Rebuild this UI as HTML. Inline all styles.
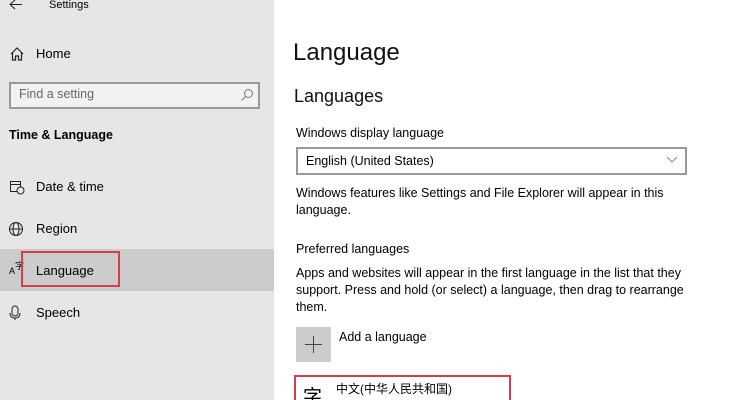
<!DOCTYPE html>
<html style="overflow:hidden;height:400px"><head><meta charset="utf-8"><style>
*{margin:0;padding:0;box-sizing:border-box}
body{width:741px;height:400px;overflow:hidden;background:#fff;font-family:"Liberation Sans","Noto Sans CJK SC",sans-serif;color:#000;position:relative;font-size:12px}
.side{position:absolute;left:0;top:0;width:274px;height:400px;background:#e6e6e6}
.a{position:absolute;white-space:nowrap}
.sel{position:absolute;left:0;top:249px;width:274px;height:42px;background:#cccccc}
.red{position:absolute;border:2px solid #d0404a}
svg{position:absolute}
</style></head><body>
<div class="side">
<div class="sel"></div>
<svg style="left:9px;top:0" width="14" height="10" viewBox="0 0 14 10"><path d="M6 0L1 4.5 6 9M1 4.5H13" stroke="#222" fill="none" stroke-width="1"/></svg>
<div class="a" style="left:49px;top:-1px;font-size:11px">Settings</div>
<svg style="left:9px;top:46px" width="16" height="16" viewBox="0 0 16 16"><path d="M2 8L8 2 14 8M3.5 6.5V14H6.5V10H9.5V14H12.5V6.5" stroke="#222" fill="none" stroke-width="1.2"/></svg>
<div class="a" style="left:36px;top:46px;font-size:13px">Home</div>
<div class="a" style="left:9px;top:82px;width:251px;height:27px;border:2px solid #999;background:#f2f2f2"></div>
<div class="a" style="left:19px;top:87px;font-size:12.5px;color:#666">Find a setting</div>
<svg style="left:240px;top:88px" width="14" height="14" viewBox="0 0 14 14"><circle cx="8.5" cy="5.5" r="4" stroke="#777" fill="none"/><path d="M5.5 8.5L1.5 12.5" stroke="#777"/></svg>
<div class="a" style="left:9px;top:128px;font-size:12.5px;font-weight:bold">Time &amp; Language</div>
<svg style="left:9px;top:179px" width="16" height="16" viewBox="0 0 16 16"><rect x="1.5" y="2.5" width="10" height="10" stroke="#222" fill="none"/><path d="M1.5 5.5H11.5" stroke="#222"/><circle cx="11.5" cy="11.5" r="3.5" fill="#e6e6e6" stroke="#222"/></svg>
<div class="a" style="left:36px;top:179px;font-size:13px">Date &amp; time</div>
<svg style="left:8px;top:221px" width="16" height="16" viewBox="0 0 16 16"><circle cx="8" cy="8" r="6.5" stroke="#222" fill="none"/><ellipse cx="8" cy="8" rx="3" ry="6.5" stroke="#222" fill="none"/><path d="M1.5 8H14.5" stroke="#222"/></svg>
<div class="a" style="left:36px;top:221px;font-size:13px">Region</div>
<div class="a" style="left:9px;top:266px;font-size:9px">A</div>
<div class="a" style="left:15px;top:259px;font-size:9px">字</div>
<div class="a" style="left:36px;top:263px;font-size:13px">Language</div>
<div class="red" style="left:21px;top:251px;width:99px;height:36px"></div>
<svg style="left:9px;top:305px" width="12" height="16" viewBox="0 0 12 16"><rect x="3" y="1" width="6" height="10" rx="3" stroke="#222" fill="none"/><path d="M1 8Q1 13 6 13 11 13 11 8M6 13V15" stroke="#222" fill="none"/></svg>
<div class="a" style="left:36px;top:305px;font-size:13px">Speech</div>
</div>
<div class="a" style="left:293px;top:39px;font-size:24px;color:#111">Language</div>
<div class="a" style="left:294px;top:86px;font-size:18px;color:#111">Languages</div>
<div class="a" style="left:296px;top:126px;font-size:12.5px">Windows display language</div>
<div class="a" style="left:296px;top:147px;width:391px;height:28px;border:2px solid #999"></div>
<div class="a" style="left:306px;top:154px;font-size:12.5px">English (United States)</div>
<svg style="left:666px;top:156px" width="12" height="8" viewBox="0 0 12 8"><path d="M1 1L6 6 11 1" stroke="#888" fill="none"/></svg>
<div class="a" style="left:296px;top:185px;font-size:12.5px;line-height:17px">Windows features like Settings and File Explorer will appear in this<br>language.</div>
<div class="a" style="left:296px;top:242px;font-size:12.5px">Preferred languages</div>
<div class="a" style="left:296px;top:265px;font-size:12.5px;line-height:17px">Apps and websites will appear in the first language in the list that they<br>support. Press and hold (or select) a language, then drag to rearrange<br>them.</div>
<div class="a" style="left:296px;top:327px;width:35px;height:35px;background:#cccccc"></div>
<svg style="left:305px;top:336px" width="17" height="17" viewBox="0 0 17 17"><path d="M8.5 0V17M0 8.5H17" stroke="#444"/></svg>
<div class="a" style="left:339px;top:330px;font-size:12.5px">Add a language</div>
<div class="red" style="left:294px;top:375px;width:217px;height:26px;border-bottom:none"></div>
<div class="a" style="left:303px;top:382px;font-size:19px">字</div>
<div class="a" style="left:336px;top:380px;font-size:12px">中文(中华人民共和国)</div>
</body></html>
